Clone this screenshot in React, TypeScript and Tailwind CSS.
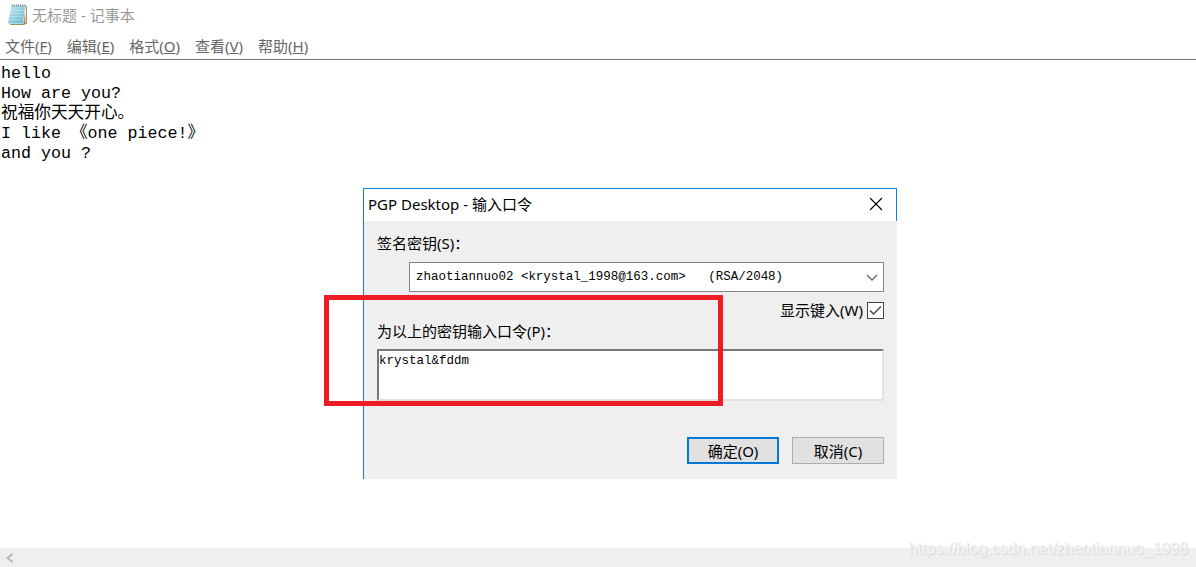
import { useState } from 'react';

const uiFont = 'font-["Noto_Sans","Noto_Sans_CJK_SC",sans-serif]';
// ch-width keeps latin letters at half an em next to the chinese text
const monoFont = 'font-["Liberation_Mono","Noto_Sans_CJK_SC",monospace] [font-size-adjust:ch-width_0.5]';

const menus = [
    { label: '文件', hotkey: 'F' },
    { label: '编辑', hotkey: 'E' },
    { label: '格式', hotkey: 'O' },
    { label: '查看', hotkey: 'V' },
    { label: '帮助', hotkey: 'H' },
];

const initialText = `hello
How are you?
祝福你天天开心。
I like 《one piece!》
and you ?`;

function NotepadIcon() {
    return (
        <svg width="21" height="22" viewBox="0 1 20 21" aria-hidden="true">
            <defs>
                <linearGradient id="page" x1="0" y1="0" x2="1" y2="1">
                    <stop offset="0" stopColor="#c9eaf2" />
                    <stop offset="0.55" stopColor="#8fcfe0" />
                    <stop offset="1" stopColor="#5fb0c8" />
                </linearGradient>
            </defs>
            <path d="M5 3h14v16.5l-3 1.5H3z" fill="#a08d62" />
            <path d="M4.5 2.5h13.5l-2.500 17.500H2z" fill="#f4f1e4" />
            <path d="M4.300 2.500h13L15 19.500H.8z" fill="url(#page)" />
            <path d="M17.600 4v14.500" stroke="#efe6c8" />
            <path d="M4 7h12M3.500 10h12M3 13h12M2.500 16h12" stroke="#fff" strokeOpacity="0.3" />
            <path d="M4.500 2.500h13" stroke="#70878d" strokeWidth="2" strokeDasharray="1 1" />
        </svg>
    );
}

function PassphraseDialog() {
    const [showTyping, setShowTyping] = useState(true);
    const [passphrase, setPassphrase] = useState('krystal&fddm');

    return (
        <div
            role="dialog"
            aria-labelledby="dialog-title"
            className={`absolute left-[363px] top-[188px] w-[534px] border-l border-l-[#1a7fd4] bg-[#efefef] text-[15px] leading-5 text-black ${uiFont}`}
        >
            <div className="flex h-[33px] items-center justify-between border-t border-r border-[#1a7fd4] bg-white pb-0.5 pl-1 pr-3">
                <h2 id="dialog-title">PGP Desktop - 输入口令</h2>
                <button type="button" aria-label="关闭" className="p-px">
                    <svg width="14" height="14" viewBox="0 0 14 14" stroke="#000" strokeWidth="1.100">
                        <path d="M1 1l12 12M13 1L1 13" />
                    </svg>
                </button>
            </div>

            <form className="px-[13px] pb-[15px] pt-3" onSubmit={(e) => e.preventDefault()}>
                <label htmlFor="key" className="block">签名密钥(S)：</label>
                <div className="relative ml-8 mt-[9px]">
                    <select
                        id="key"
                        className={`h-[30px] w-full appearance-none border border-[#858585] bg-white pl-1.5 text-[15px] ${monoFont}`}
                    >
                        <option>{'zhaotiannuo02 <krystal_1998@163.com>\u00a0\u00a0\u00a0(RSA/2048)'}</option>
                    </select>
                    <svg className="pointer-events-none absolute right-1.5 top-3" width="12" height="8" viewBox="0 0 12 8" fill="none" stroke="#666" strokeWidth="1.300">
                        <path d="M1 1l5 5 5-5" />
                    </svg>
                </div>

                <div className="mt-2 flex items-center justify-end gap-1">
                    <label htmlFor="show">显示键入(W)</label>
                    <span className="relative flex">
                        <input
                            id="show"
                            type="checkbox"
                            checked={showTyping}
                            onChange={(e) => setShowTyping(e.target.checked)}
                            className="size-[17px] appearance-none border border-[#444] bg-white"
                        />
                        {showTyping && (
                            <svg className="pointer-events-none absolute inset-0" width="17" height="17" viewBox="0 0 17 17" fill="none" stroke="#444" strokeWidth="1.400">
                                <path d="M3 8.500l3.500 3.500 7.500-7.500" />
                            </svg>
                        )}
                    </span>
                </div>

                <label htmlFor="passphrase" className="mt-px block">为以上的密钥输入口令(P)：</label>
                <textarea
                    id="passphrase"
                    value={passphrase}
                    onChange={(e) => setPassphrase(e.target.value)}
                    spellCheck={false}
                    className={`mt-2 block h-[52px] w-full resize-none border-2 border-b-[#e3e3e3] border-l-[#777] border-r-[#e3e3e3] border-t-[#777] bg-white text-[15px] leading-5 outline-none ${monoFont}`}
                />

                <div className="mt-9 flex justify-end gap-[13px]">
                    <button type="submit" className="h-[27px] w-[92px] border-2 border-[#0078d7] bg-[#e1e1e1]">
                        确定(O)
                    </button>
                    <button type="button" className="h-[27px] w-[92px] border border-[#adadad] bg-[#e1e1e1]">
                        取消(C)
                    </button>
                </div>
            </form>

            {/* Highlight around the passphrase field */}
            <div className="pointer-events-none absolute -left-10 top-[107px] h-[111px] w-[399px] border-5 border-[#ee1c25]" />
        </div>
    );
}

export default function App() {
    const [text, setText] = useState(initialText);

    return (
        <div className="relative flex min-h-screen flex-col bg-white">
            <header className={`flex h-[30px] items-center gap-1 pl-[7px] text-[15px] text-[#999] ${uiFont}`}>
                <NotepadIcon />
                <h1>无标题 - 记事本</h1>
            </header>

            <nav className={`flex h-[30px] items-center gap-[15px] border-b border-[#777] pl-[5px] pt-1 text-[15px] text-[#666] ${uiFont}`}>
                {menus.map((menu) => (
                    <button key={menu.hotkey} type="button">
                        {menu.label}(<u>{menu.hotkey}</u>)
                    </button>
                ))}
            </nav>

            <textarea
                aria-label="文本编辑"
                value={text}
                onChange={(e) => setText(e.target.value)}
                spellCheck={false}
                className={`block w-full grow resize-none pl-px pt-1 text-[20px] leading-5 text-black outline-none ${monoFont}`}
            />

            <div className="flex h-[19px] items-center bg-[#efefef] pl-1.5">
                <button type="button" aria-label="向左滚动">
                    <svg width="8" height="10" viewBox="0 0 8 10" fill="none" stroke="#b5b5b5" strokeWidth="2">
                        <path d="M6.500 1l-5 4 5 4" />
                    </svg>
                </button>
            </div>

            <PassphraseDialog />

            <p className='pointer-events-none absolute bottom-2 right-2 font-["Liberation_Sans",sans-serif] text-[16px] leading-5 text-[#f4f4f4] [text-shadow:1px_1px_1px_#d4d4d4]'>
                https://blog.csdn.net/zhaotiannuo_1998
            </p>
        </div>
    );
}
